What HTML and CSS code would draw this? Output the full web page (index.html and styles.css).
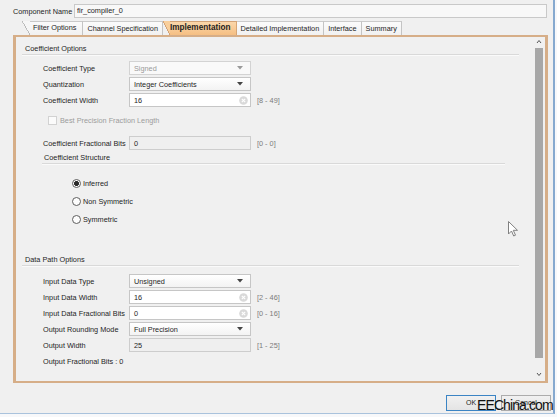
FILE: index.html
```html
<!DOCTYPE html>
<html>
<head>
<meta charset="utf-8">
<link rel="stylesheet" href="styles.css">
</head>
<body>
<div class="window">
  <div class="name-row">
    <span class="name-label">Component Name</span>
    <div class="name-input">fir_compiler_0</div>
  </div>
  <div class="tabs">
    <div class="tab first">Filter Options</div>
    <div class="tab">Channel Specification</div>
    <div class="tab active">Implementation</div>
    <div class="tab">Detailed Implementation</div>
    <div class="tab">Interface</div>
    <div class="tab last">Summary</div>
  </div>
  <div class="panel">
    <div class="content">
      <div class="group-head">Coefficient Options</div>
      <div class="rows first-rows">
        <div class="row">
          <span class="label">Coefficient Type</span>
          <div class="box select disabled"><span>Signed</span><svg class="arrow" width="6" height="4" viewBox="0 0 6 4"><path d="M0 0h6L3 3.5z" fill="#9a9a9a"/></svg></div>
        </div>
        <div class="row">
          <span class="label">Quantization</span>
          <div class="box select"><span>Integer Coefficients</span><svg class="arrow" width="6" height="4" viewBox="0 0 6 4"><path d="M0 0h6L3 3.5z" fill="#444"/></svg></div>
        </div>
        <div class="row">
          <span class="label">Coefficient Width</span>
          <div class="box input"><span>16</span><svg class="clear" width="9" height="9" viewBox="0 0 9 9"><circle cx="4.5" cy="4.5" r="4.3" fill="#d9d9d9"/><path d="M2.8 2.8l3.4 3.4M6.2 2.8L2.8 6.2" stroke="#fff" stroke-width="1.1"/></svg></div>
          <span class="range">[8 - 49]</span>
        </div>
      </div>
      <div class="check-row">
        <span class="checkbox"></span>
        <span class="check-label">Best Precision Fraction Length</span>
      </div>
      <div class="row frac-row">
        <span class="label">Coefficient Fractional Bits</span>
        <div class="box input readonly"><span>0</span></div>
        <span class="range">[0 - 0]</span>
      </div>
      <div class="sub-head">Coefficient Structure</div>
      <div class="radios">
        <div class="radio-row"><span class="radio checked"></span><span>Inferred</span></div>
        <div class="radio-row"><span class="radio"></span><span>Non Symmetric</span></div>
        <div class="radio-row"><span class="radio"></span><span>Symmetric</span></div>
      </div>
      <div class="group-head data-head">Data Path Options</div>
      <div class="rows data-rows">
        <div class="row">
          <span class="label">Input Data Type</span>
          <div class="box select"><span>Unsigned</span><svg class="arrow" width="6" height="4" viewBox="0 0 6 4"><path d="M0 0h6L3 3.5z" fill="#444"/></svg></div>
        </div>
        <div class="row">
          <span class="label">Input Data Width</span>
          <div class="box input"><span>16</span><svg class="clear" width="9" height="9" viewBox="0 0 9 9"><circle cx="4.5" cy="4.5" r="4.3" fill="#d9d9d9"/><path d="M2.8 2.8l3.4 3.4M6.2 2.8L2.8 6.2" stroke="#fff" stroke-width="1.1"/></svg></div>
          <span class="range">[2 - 46]</span>
        </div>
        <div class="row">
          <span class="label">Input Data Fractional Bits</span>
          <div class="box input"><span>0</span><svg class="clear" width="9" height="9" viewBox="0 0 9 9"><circle cx="4.5" cy="4.5" r="4.3" fill="#d9d9d9"/><path d="M2.8 2.8l3.4 3.4M6.2 2.8L2.8 6.2" stroke="#fff" stroke-width="1.1"/></svg></div>
          <span class="range">[0 - 16]</span>
        </div>
        <div class="row">
          <span class="label">Output Rounding Mode</span>
          <div class="box select"><span>Full Precision</span><svg class="arrow" width="6" height="4" viewBox="0 0 6 4"><path d="M0 0h6L3 3.5z" fill="#444"/></svg></div>
        </div>
        <div class="row">
          <span class="label">Output Width</span>
          <div class="box input readonly"><span>25</span></div>
          <span class="range">[1 - 25]</span>
        </div>
        <div class="row">
          <span class="label wide">Output Fractional Bits : 0</span>
        </div>
      </div>
    </div>
    <div class="scrollbar">
      <svg class="sb-arrow" width="10" height="10" viewBox="0 0 10 10"><path d="M3 6l2-2.5L7 6" fill="none" stroke="#555" stroke-width="1"/></svg>
      <div class="sb-thumb"></div>
      <div class="sb-space"></div>
      <svg class="sb-arrow" width="10" height="10" viewBox="0 0 10 10"><path d="M3 4l2 2.5L7 4" fill="none" stroke="#555" stroke-width="1"/></svg>
    </div>
  </div>
  <div class="buttons">
    <div class="btn ok">OK</div>
    <div class="btn">Cancel</div>
  </div>
</div>
<div class="watermark">EEChina.com</div>
<svg class="cursor" width="10" height="16" viewBox="0 0 10 16"><path d="M0.5 0.5v12.5l3-3 2.2 5 1.8-0.8-2.2-4.9h4.2z" fill="#fff" stroke="#808080" stroke-width="1"/></svg>
</body>
</html>
```

FILE: styles.css
```css
* { box-sizing: border-box; }
html, body { margin: 0; padding: 0; }
body {
  width: 557px;
  height: 417px;
  background: #f7f8fa;
  font-family: "Liberation Sans", Arial, sans-serif;
  font-size: 7.3px;
  color: #1e1e1e;
  position: relative;
  overflow: hidden;
}
.window {
  width: 555px;
  height: 414px;
  background: #f0f0f0;
  border-right: 2px solid #86a9cf;
  border-bottom: 1px solid #a9c2dc;
}
.name-row {
  display: flex;
  align-items: center;
  padding: 4px 6px 0 13px;
  height: 18px;
}
.name-label { width: 61px; }
.name-input {
  flex: 1;
  height: 14px;
  border: 1px solid #c9c9c9;
  background: #f8f8f8;
  padding-left: 2px;
  line-height: 12px;
}
.tabs {
  display: flex;
  margin: 3px 0 0 22px;
  height: 14px;
}
.tab {
  position: relative;
  height: 14px;
  line-height: 13px;
  padding: 0 4px;
  background: linear-gradient(#fbfbfb, #f1f1f1);
  border-top: 1px solid #cbcbcb;
  border-right: 1px solid #c4c4c4;
  white-space: nowrap;
}
.tab.first {
  padding-left: 11px;
  padding-right: 6px;
  border-top: none;
  background: linear-gradient(to top right, #f0f0f0 47%, #b9b9b9 48%, #b9b9b9 53%, #f6f6f6 54%) left top / 8px 14px no-repeat,
              linear-gradient(#c9c9c9, #c9c9c9) 7px 0 / 100% 1px no-repeat,
              linear-gradient(#fbfbfb, #f1f1f1) 8px 0 / 100% 100% no-repeat;
}
.tab.active {
  font-weight: bold;
  font-size: 8.2px;
  padding: 0 5px 0 7px;
  border-top: none;
  border-right: 1px solid #d6a676;
  background: linear-gradient(to top right, #f0f0f0 45%, #d3a377 47%, #d3a377 53%, #f9cf9c 55%) left top / 7px 14px no-repeat,
              linear-gradient(#d3a377, #d3a377) 6px 0 / 100% 1px no-repeat,
              linear-gradient(#fbd7aa, #f5bd80) 7px 1px / 100% 100% no-repeat;
}
.panel {
  margin-left: 13px;
  width: 535px;
  height: 348px;
  border-style: solid;
  border-color: #d6ae88;
  border-width: 2px 3px 2px 3px;
  display: flex;
}
.content { flex: 1; }
.group-head {
  margin: 6px 0 0 6px;
  width: 497px;
  height: 12px;
  line-height: 11px;
  padding-left: 3px;
  border-bottom: 1px solid #d9d9d9;
  box-shadow: 0 1px 0 #fafafa;
}
.data-head { margin-top: 26px; }
.rows { padding-left: 27px; }
.first-rows { margin-top: 5px; }
.data-rows { margin-top: 7px; }
.row {
  display: flex;
  align-items: center;
  height: 16px;
  padding-left: 27px;
}
.rows .row { padding-left: 0; }
.frac-row { margin-top: 7px; }
.label { width: 86px; white-space: nowrap; }
.label.wide { width: auto; }
.box {
  width: 122px;
  height: 14px;
  border: 1px solid #c6c6c6;
  display: flex;
  align-items: center;
  justify-content: space-between;
  padding: 0 2px 0 4px;
}
.select { background: linear-gradient(#ffffff, #f3f3f3); padding-right: 7px; }
.select.disabled { color: #9a9a9a; border-color: #d3d3d3; background: #f9f9f9; }
.input { background: #ffffff; }
.input.readonly { background: #efefef; border-color: #cdcdcd; }
.range { margin-left: 6px; color: #7c7c7c; }
.check-row {
  display: flex;
  align-items: center;
  height: 16px;
  margin-top: 4px;
  padding-left: 32px;
}
.checkbox {
  width: 9px;
  height: 9px;
  border: 1px solid #d2d2d2;
  background: #fbfbfb;
  margin-right: 3px;
}
.check-label { color: #9c9c9c; }
.sub-head {
  margin: 1px 0 0 26px;
  width: 463px;
  height: 12px;
  line-height: 11px;
  padding-left: 2px;
  border-bottom: 1px solid #d9d9d9;
  box-shadow: 0 1px 0 #fafafa;
}
.radios { margin-top: 10px; padding-left: 56px; }
.radio-row {
  display: flex;
  align-items: center;
  height: 18px;
}
.radio {
  width: 9px;
  height: 9px;
  border: 1px solid #5f5f5f;
  border-radius: 50%;
  background: #fdfdfd;
  margin-right: 2px;
  position: relative;
}
.radio.checked {
  background: radial-gradient(circle, #2a2a2a 0 2.2px, #fdfdfd 2.6px);
}
.scrollbar {
  width: 10px;
  margin-right: 1px;
  display: flex;
  flex-direction: column;
  align-items: center;
}
.sb-arrow { flex: none; }
.sb-thumb {
  width: 8px;
  height: 310px;
  margin-top: 1px;
  background: #a7a7a7;
}
.sb-space { flex: 1; }
.sb-arrow:last-child { margin-bottom: 2px; }
.buttons {
  display: flex;
  justify-content: flex-end;
  gap: 5px;
  margin-top: 12px;
  padding-right: 2px;
}
.btn {
  width: 50px;
  height: 16px;
  border: 1px solid #acacac;
  background: linear-gradient(#f1f1f1, #e4e4e4);
  text-align: center;
  line-height: 14px;
  font-size: 7px;
}
.btn.ok { border-color: #3b84c4; }
.watermark {
  position: absolute;
  left: 477px;
  top: 398px;
  font-size: 14px;
  line-height: 15px;
  letter-spacing: -0.9px;
  color: #111;
}
.cursor {
  position: absolute;
  left: 508px;
  top: 221px;
}
```
